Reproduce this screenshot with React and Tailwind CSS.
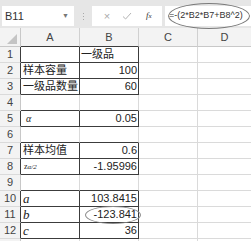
import React from 'react';

const GRID = 'border-[#dadada]';
const DARK = 'border-[#3c3c3c]';

// blocks of rows that carry thin dark borders over columns A:B
const blocks = [[1, 3], [5, 5], [7, 8], [10, 12]];
const inBlock = (r) => blocks.some(([a, b]) => r >= a && r <= b);

const serif = { fontFamily: '"Liberation Serif", serif' };

const rows = [
  { a: null, b: '一级品', bLeft: true },
  { a: '样本容量', b: '100' },
  { a: '一级品数量', b: '60' },
  { a: null, b: null },
  { a: <span className="italic text-[10px] pl-[3px]" style={serif}>α</span>, b: '0.05' },
  { a: null, b: null },
  { a: '样本均值', b: '0.6' },
  {
    a: (
      <span className="text-[8px] pl-[1px]" style={serif}>
        z<span className="text-[7px] italic">α/2</span>
      </span>
    ),
    b: '-1.95996',
  },
  { a: null, b: null },
  { a: <span className="italic text-[13px]" style={serif}>a</span>, b: '103.8415' },
  { a: <span className="italic text-[13px]" style={serif}>b</span>, b: '-123.841' },
  { a: <span className="italic text-[13px]" style={serif}>c</span>, b: '36' },
];

function Row({ r, data }) {
  const here = inBlock(r);
  const below = inBlock(r) || inBlock(r + 1);
  const bottomAB = below ? DARK : GRID;
  return (
    <div className="flex h-[16px] shrink-0">
      <div className={`w-[21px] shrink-0 bg-[#f3f3f3] border-b border-r border-b-[#dadada] ${here ? 'border-r-[#3c3c3c]' : 'border-r-[#c8c8c8]'} flex items-center justify-center text-[11px] text-[#444]`}>
        {r}
      </div>
      <div className={`w-[59px] shrink-0 border-b border-r ${bottomAB} ${here ? 'border-r-[#3c3c3c]' : 'border-r-[#dadada]'} flex items-center pl-[2px] text-[11px] text-[#222] overflow-hidden whitespace-nowrap`}>
        {data.a}
      </div>
      <div className={`w-[59px] shrink-0 border-b border-r ${bottomAB} ${here ? 'border-r-[#3c3c3c]' : 'border-r-[#dadada]'} flex items-center ${data.bLeft ? 'justify-start pl-[1px]' : 'justify-end pr-[1px]'} text-[11px] text-[#222] whitespace-nowrap`}>
        {data.b}
      </div>
      <div className={`w-[59px] shrink-0 border-b border-r ${GRID}`} />
      <div className={`flex-1 border-b ${GRID}`} />
    </div>
  );
}

export default function App() {
  return (
    <div
      className="relative w-[251px] h-[241px] overflow-hidden bg-white flex flex-col"
      style={{ fontFamily: '"Liberation Sans", "Noto Sans CJK SC", sans-serif' }}
    >
      {/* Formula toolbar */}
      <div className="h-[28px] shrink-0 bg-[#e6e6e6] flex items-start pt-[6px]">
        <div className="ml-[2px] w-[72px] h-[20px] bg-white flex items-center justify-between px-[3px]">
          <span className="text-[11px] text-[#333]">B11</span>
          <span className="text-[7px] text-[#777] mr-[2px]">▼</span>
        </div>
        <div className="w-[18px] h-[20px] flex flex-col items-center justify-center gap-[2px]">
          <span className="w-[1px] h-[1px] bg-[#aaa]" />
          <span className="w-[1px] h-[1px] bg-[#aaa]" />
          <span className="w-[1px] h-[1px] bg-[#aaa]" />
        </div>
        <div className="w-[70px] h-[20px] bg-white flex items-center text-[#aaa]">
          <span className="w-[28px] text-center text-[11px] pl-[2px]">×</span>
          <svg width="12" height="10" viewBox="0 0 12 10" className="ml-[1px]">
            <path d="M2 5.5 L4.6 8 L10 2" fill="none" stroke="#b4b4b4" strokeWidth="1" />
          </svg>
          <span className="ml-[13px] text-[9px] italic text-[#333]" style={serif}>
            f<span className="text-[7px]">x</span>
          </span>
        </div>
        <div className="ml-[3px] flex-1 h-[20px] bg-white flex items-center pl-[4px]">
          <span className="text-[9px] text-[#333] whitespace-nowrap">=-(2*B2*B7+B8^2)</span>
        </div>
      </div>

      {/* Column headers */}
      <div className="flex h-[19px] shrink-0 bg-[#f3f3f3]">
        <div className="w-[21px] shrink-0 border-b border-r border-[#c8c8c8] flex items-end justify-end pr-[3px] pb-[2px]">
          <svg width="10" height="10" viewBox="0 0 10 10">
            <polygon points="10,0 10,10 0,10" fill="#c4c4c4" />
          </svg>
        </div>
        {['A', 'B', 'C'].map((c) => (
          <div key={c} className={`w-[59px] shrink-0 border-b border-r border-r-[#d0d0d0] ${c === 'C' ? 'border-b-[#c8c8c8]' : 'border-b-[#3c3c3c]'} flex items-center justify-center text-[11px] text-[#444]`}>
            {c}
          </div>
        ))}
        <div className="flex-1 border-b border-[#c8c8c8] flex items-center justify-center text-[11px] text-[#444]">D</div>
      </div>

      {rows.map((d, i) => (
        <Row key={i} r={i + 1} data={d} />
      ))}

      {/* grid stub of the next row, cut by the window edge */}
      <div className="flex flex-1">
        <div className="w-[21px] shrink-0 bg-[#f3f3f3] border-r border-[#c8c8c8]" />
        <div className={`w-[59px] shrink-0 border-r ${GRID}`} />
        <div className={`w-[59px] shrink-0 border-r ${GRID}`} />
        <div className={`w-[59px] shrink-0 border-r ${GRID}`} />
      </div>

      {/* annotation ovals */}
      <div className="absolute left-[168px] top-[3px] w-[82px] h-[26px] rounded-[50%] border border-[#7a7a7a]" />
      <div className="absolute left-[85px] top-[206px] w-[56px] h-[18px] rounded-[50%] border border-[#8a8a8a]" />
    </div>
  );
}
